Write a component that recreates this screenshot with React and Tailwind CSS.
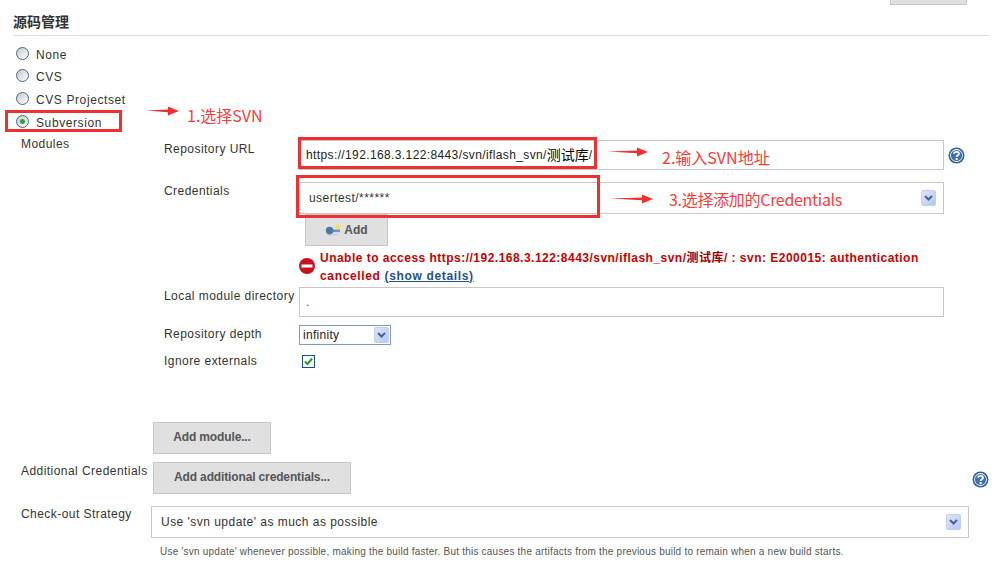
const cjk = '"Liberation Sans", "Noto Sans CJK SC", sans-serif'

function Radio({ checked, label }) {
  return (
    <div className="flex items-center h-[22.67px]">
      <span className="flex items-center justify-center w-[13px] h-[13px] rounded-full border border-[#3f6694] bg-gradient-to-br from-[#c8c8c4] to-white">
        {checked && <span className="w-[5px] h-[5px] rounded-full bg-[#2aa63a]" />}
      </span>
      <span className="ml-[7px] pt-[3px] text-[12px] tracking-[0.6px] text-[#333]">{label}</span>
    </div>
  )
}

function Chevron() {
  return (
    <span className="flex items-center justify-center w-[15px] h-[16px] rounded-[2px] bg-gradient-to-br from-[#dde6fb] to-[#b5c8f4] border border-[#c0cfee]">
      <svg width="9" height="6" viewBox="0 0 9 6">
        <path d="M1 1 L4.5 4.5 L8 1" fill="none" stroke="#4d6185" strokeWidth="2" />
      </svg>
    </span>
  )
}

function Help() {
  return (
    <svg width="17" height="17" viewBox="0 0 17 17">
      <circle cx="8.5" cy="8.5" r="8" fill="#2f5f9e" />
      <circle cx="8.5" cy="8.5" r="6.4" fill="#fff" />
      <circle cx="8.5" cy="8.5" r="5.6" fill="#3f6fae" />
      <path d="M6.1 6.8 C6.1 4.2 11 4.2 11 6.8 C11 8.4 8.6 8.2 8.6 10" fill="none" stroke="#fff" strokeWidth="1.8" />
      <rect x="7.6" y="11" width="2" height="2" fill="#fff" />
    </svg>
  )
}

function Label({ children, className = '' }) {
  return <div className={`text-[12px] leading-[16px] tracking-[0.45px] text-[#333] ${className}`}>{children}</div>
}

function Arrow({ className, width }) {
  return (
    <svg className={`absolute ${className}`} width={width} height="10" viewBox={`0 0 ${width} 10`}>
      <path d={`M0 4.6 L${width - 11} 3.4 L${width - 11} 0.5 L${width} 5 L${width - 11} 9.5 L${width - 11} 6.2 Z`} fill="#f03030" />
    </svg>
  )
}

function Note({ className, children }) {
  return <div className={`absolute text-[16px] leading-[20px] text-[#ff3a3a] whitespace-nowrap ${className}`} style={{ fontFamily: '"Noto Sans CJK SC", sans-serif' }}>{children}</div>
}

export default function App() {
  return (
    <div className="relative w-[1003px] h-[578px] overflow-hidden bg-white" style={{ fontFamily: cjk }}>
      <div className="flex justify-end pr-[36px]">
        <div className="w-[77px] h-[5px] bg-[#e0e0e0] border-x border-b border-[#c6c6c6]" />
      </div>

      <div className="mt-[10px] ml-[13px] w-[976px] h-[21px] border-b border-[#dcdcdc] text-[14px] font-bold leading-[15px] text-[#333]">
        源码管理
      </div>

      <div className="mt-[6px] pl-[16px]">
        <Radio label="None" />
        <Radio label="CVS" />
        <Radio label="CVS Projectset" />
        <Radio checked label="Subversion" />
      </div>

      <div className="flex pl-[21px]">
        <Label className="w-[143px] pt-[3px]">Modules</Label>
        <div className="pt-[7px]">
          <div className="flex">
            <Label className="w-[135px] pt-[1px]">Repository URL</Label>
            <div className="w-[645px] h-[30px] border border-[#c6c6c6] flex items-center pl-[6px] pt-[1px] text-[12px] tracking-[0.38px] text-[#222]">
              <span>https://192.168.3.122:8443/svn/iflash_svn/</span>
              <span className="text-[14px] tracking-normal text-black">测试库</span>
              <span>/</span>
            </div>
            <span className="ml-[4px] mt-[7px]"><Help /></span>
          </div>

          <div className="flex mt-[12px]">
            <Label className="w-[135px] pt-[1px]">Credentials</Label>
            <div className="w-[645px] h-[32px] border border-[#c6c6c6] flex items-center justify-between pl-[9px] pr-[7px] text-[12px] tracking-[0.45px] text-[#333]">
              usertest/******
              <Chevron />
            </div>
          </div>

          <div className="ml-[141px] flex items-center justify-center gap-[3px] w-[83px] h-[32px] bg-[#e0e0e0] border border-[#c6c6c6] text-[12px] font-bold text-[#555]">
            <svg width="16" height="12" viewBox="0 0 16 12">
              <rect x="2" y="10" width="11" height="1.5" fill="#ccc" />
              <rect x="5" y="5.5" width="10" height="2.6" fill="#6a93bf" />
              <circle cx="4.6" cy="6.6" r="3.8" fill="#4d78aa" />
              <circle cx="12.5" cy="3" r="2.4" fill="#f5e04e" />
            </svg>
            Add
          </div>

          <div className="flex mt-[2px] ml-[135px]">
            <svg className="mt-[10px] shrink-0" width="16" height="16" viewBox="0 0 16 16">
              <circle cx="8" cy="8" r="8" fill="#c6121f" />
              <rect x="2.5" y="6.5" width="11" height="3" fill="#fff" />
            </svg>
            <div className="ml-[5px] w-[620px] pt-[1px] text-[12px] font-bold leading-[18px] text-[#c80000]">
              <div className="flex tracking-[0.48px] whitespace-pre">
                <span>Unable to access https://192.168.3.122:8443/svn/iflash_svn/</span>
                <span className="text-[#a00000]">测试库</span>
                <span>/ : svn: E200015: authentication</span>
              </div>
              <div className="flex tracking-[0.65px] whitespace-pre">
                <span>cancelled </span>
                <span className="text-[#22508f] underline">(show details)</span>
              </div>
            </div>
          </div>

          <div className="flex mt-[2px]">
            <Label className="w-[135px] pt-[1px]">Local module directory</Label>
            <div className="w-[645px] h-[30px] border border-[#c6c6c6] flex items-center pl-[6px] text-[12px] text-[#555]">.</div>
          </div>

          <div className="flex mt-[8px]">
            <Label className="w-[135px] pt-[1px]">Repository depth</Label>
            <div className="w-[92px] h-[20px] border border-[#7f9db9] flex items-center justify-between pl-[3px] pr-[1px] text-[12px] tracking-[0.3px] text-[#222]">
              <span className="pt-[1px]">infinity</span>
              <Chevron />
            </div>
          </div>

          <div className="flex items-center mt-[8px]">
            <Label className="w-[135px] mb-[2px]">Ignore externals</Label>
            <span className="flex items-center justify-center ml-[3px] w-[13px] h-[13px] border border-[#1c5180] bg-white">
              <svg width="9" height="9" viewBox="0 0 9 9">
                <path d="M1 4.5 L3.5 7 L8 1.5" fill="none" stroke="#21a121" strokeWidth="2" />
              </svg>
            </span>
          </div>
        </div>
      </div>

      <div className="flex pl-[21px] mt-[51px]">
        <div className="w-[132px]" />
        <div className="w-[118px] h-[32px] pb-[2px] flex items-center justify-center bg-[#e0e0e0] border border-[#c6c6c6] text-[12px] font-bold tracking-[-0.14px] text-[#555]">
          Add module...
        </div>
      </div>

      <div className="flex pl-[21px] mt-[8px]">
        <Label className="w-[132px] pt-[1px]">Additional Credentials</Label>
        <div className="w-[198px] h-[32px] pb-[2px] flex items-center justify-center bg-[#e0e0e0] border border-[#c6c6c6] text-[12px] font-bold tracking-[-0.14px] text-[#555]">
          Add additional credentials...
        </div>
        <span className="ml-[621px] mt-[9px]"><Help /></span>
      </div>

      <div className="flex pl-[21px] mt-[12px]">
        <Label className="w-[130px]">Check-out Strategy</Label>
        <div className="w-[818px] h-[32px] border border-[#c6c6c6] flex items-center justify-between pl-[9px] pr-[7px] text-[12px] tracking-[0.47px] text-[#333]">
          Use 'svn update' as much as possible
          <Chevron />
        </div>
      </div>

      <div className="mt-[8px] ml-[160px] text-[10px] leading-[12px] tracking-[0.22px] text-[#555]">
        Use 'svn update' whenever possible, making the build faster. But this causes the artifacts from the previous build to remain when a new build starts.
      </div>

      {/* red annotations drawn over the screenshot */}
      <div className="absolute left-[5px] top-[110px] w-[117px] h-[22px] border-[3px] border-[#f03030]" />
      <div className="absolute left-[298px] top-[137px] w-[299px] h-[32px] border-[3px] border-[#f03030]" />
      <div className="absolute left-[296px] top-[175px] w-[304px] h-[43px] border-[3px] border-[#f03030]" />
      <Arrow className="left-[146px] top-[106px]" width={33} />
      <Arrow className="left-[608px] top-[147px]" width={40} />
      <Arrow className="left-[610px] top-[194px]" width={43} />
      <Note className="left-[187px] top-[105px]">1.选择SVN</Note>
      <Note className="left-[662px] top-[147px]">2.输入SVN地址</Note>
      <Note className="left-[669px] top-[189px] tracking-[-0.3px]">3.选择添加的Credentials</Note>
    </div>
  )
}
